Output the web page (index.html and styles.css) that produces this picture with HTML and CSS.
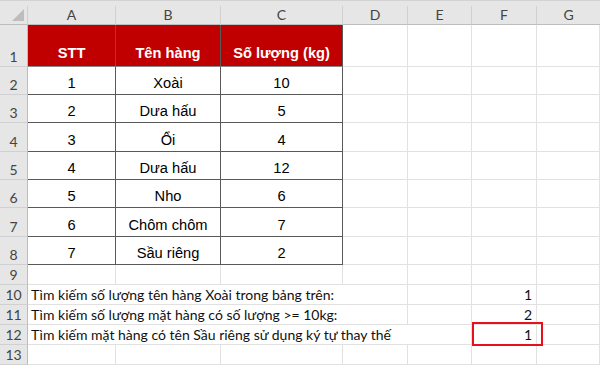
FILE: index.html
```html
<!DOCTYPE html>
<html lang="vi">
<head>
<meta charset="utf-8">
<title>Sheet</title>
<link rel="stylesheet" href="styles.css">
</head>
<body>
<div class="sheet">
  <div class="strip"></div>
  <div class="grid">
    <div class="ch corner"><span class="tri"></span></div>
    <div class="ch">A</div><div class="ch">B</div><div class="ch">C</div><div class="ch">D</div><div class="ch">E</div><div class="ch">F</div><div class="ch last">G</div>

    <div class="rh r1">1</div>
    <div class="c t head">STT</div><div class="c t head">Tên hàng</div><div class="c t head">Số lượng (kg)</div>
    <div class="c"></div><div class="c"></div><div class="c"></div><div class="c"></div>

    <div class="rh">2</div>
    <div class="c t">1</div><div class="c t">Xoài</div><div class="c t">10</div>
    <div class="c"></div><div class="c"></div><div class="c"></div><div class="c"></div>

    <div class="rh">3</div>
    <div class="c t">2</div><div class="c t">Dưa hấu</div><div class="c t">5</div>
    <div class="c"></div><div class="c"></div><div class="c"></div><div class="c"></div>

    <div class="rh">4</div>
    <div class="c t">3</div><div class="c t">Ổi</div><div class="c t">4</div>
    <div class="c"></div><div class="c"></div><div class="c"></div><div class="c"></div>

    <div class="rh">5</div>
    <div class="c t">4</div><div class="c t">Dưa hấu</div><div class="c t">12</div>
    <div class="c"></div><div class="c"></div><div class="c"></div><div class="c"></div>

    <div class="rh">6</div>
    <div class="c t">5</div><div class="c t">Nho</div><div class="c t">6</div>
    <div class="c"></div><div class="c"></div><div class="c"></div><div class="c"></div>

    <div class="rh">7</div>
    <div class="c t">6</div><div class="c t">Chôm chôm</div><div class="c t">7</div>
    <div class="c"></div><div class="c"></div><div class="c"></div><div class="c"></div>

    <div class="rh">8</div>
    <div class="c t">7</div><div class="c t">Sầu riêng</div><div class="c t">2</div>
    <div class="c"></div><div class="c"></div><div class="c"></div><div class="c"></div>

    <div class="rh">9</div>
    <div class="c"></div><div class="c"></div><div class="c"></div><div class="c"></div><div class="c"></div><div class="c"></div><div class="c"></div>

    <div class="rh">10</div>
    <div class="c txt span3">Tìm kiếm số lượng tên hàng Xoài trong bảng trên:</div>
    <div class="c"></div><div class="c"></div><div class="c num">1</div><div class="c"></div>

    <div class="rh">11</div>
    <div class="c txt span3">Tìm kiếm số lượng mặt hàng có số lượng &gt;= 10kg:</div>
    <div class="c"></div><div class="c"></div><div class="c num">2</div><div class="c"></div>

    <div class="rh">12</div>
    <div class="c txt span4">Tìm kiếm mặt hàng có tên Sầu riêng sử dụng ký tự thay thế</div>
    <div class="c"></div><div class="c num sel">1<span class="box"></span></div><div class="c"></div>

    <div class="rh">13</div>
    <div class="c"></div><div class="c"></div><div class="c"></div><div class="c"></div><div class="c"></div><div class="c"></div><div class="c"></div>
  </div>
</div>
</body>
</html>
```
FILE: styles.css
```css
html, body {
  margin: 0;
  padding: 0;
  background: #ffffff;
}
.sheet {
  width: 600px;
  height: 365px;
  overflow: hidden;
  font-family: "Liberation Sans", Arial, sans-serif;
}
.strip {
  height: 6px;
  background: #e6e6e6;
  border-top: 1px solid #d2d2d2;
  box-sizing: border-box;
}
.grid {
  display: grid;
  grid-template-columns: 28px 88px 105px 122px 65px 64px 65px 63px;
  grid-template-rows: 19px 42px 28px 28px 29px 28px 28px 29px 28px 20px 20px 20px 20px 20px;
}
.grid > div {
  box-sizing: border-box;
}
.ch {
  background: #e6e6e6;
  border-right: 1px solid #d0d0d0;
  border-bottom: 1px solid #bdbdbd;
  color: #444;
  font-family: "Lato", "Open Sans", sans-serif;
  font-size: 14px;
  text-align: center;
  line-height: 18px;
}
.ch.last { border-right: none; }
.corner {
  position: relative;
}
.tri {
  position: absolute;
  right: 3px;
  bottom: 3px;
  width: 0;
  height: 0;
  border-left: 12px solid transparent;
  border-bottom: 12px solid #bdbdbd;
}
.rh {
  background: #e6e6e6;
  border-right: 1px solid #bdbdbd;
  border-bottom: 1px solid #d0d0d0;
  color: #444;
  font-family: "Lato", "Open Sans", sans-serif;
  font-size: 14px;
  display: flex;
  align-items: flex-end;
  justify-content: center;
  padding-bottom: 1px;
  line-height: 16px;
}
.c {
  border-right: 1px solid #e1e1e1;
  border-bottom: 1px solid #e1e1e1;
  display: flex;
  align-items: flex-end;
  font-size: 14.67px;
  color: #000;
  line-height: 17px;
  white-space: nowrap;
}
.t {
  justify-content: center;
  border-right: 1px solid #595959;
  border-bottom: 1px solid #595959;
  padding-bottom: 2px;
}
.head {
  background: #c00000;
  color: #ffffff;
  font-weight: bold;
  padding-bottom: 4px;
  border-bottom-color: #8a8a8a;
}
.txt {
  font-family: "Lato", "Open Sans", sans-serif;
  font-size: 14px;
  color: #111;
  padding-left: 3px;
  padding-bottom: 1px;
  overflow: visible;
}
.span3 { grid-column: span 3; }
.span4 { grid-column: span 4; }
.span3, .span4 { border-right: none; }
.num {
  justify-content: flex-end;
  font-family: "Lato", "Open Sans", sans-serif;
  font-size: 14px;
  color: #111;
  padding-right: 4px;
  padding-bottom: 1px;
}
.sel {
  position: relative;
}
.box {
  position: absolute;
  left: 0;
  top: -3px;
  width: 71px;
  height: 24px;
  border: 2px solid #e8101a;
  box-sizing: border-box;
}
```
